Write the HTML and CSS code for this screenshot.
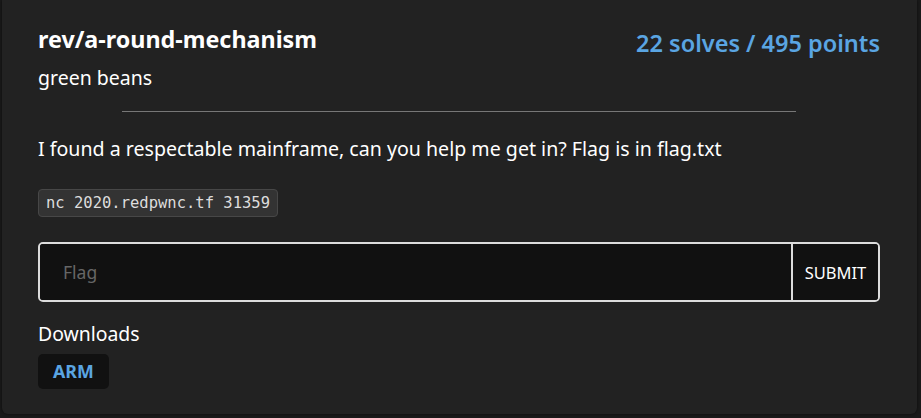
FILE: index.html
```html
<!DOCTYPE html>
<html>
<head>
<meta charset="utf-8">
<link rel="stylesheet" href="styles.css">
</head>
<body>
<div class="card">
  <div class="head">
    <div>
      <h1 class="title">rev/a-round-mechanism</h1>
      <p class="author">green beans</p>
    </div>
    <div class="score">22 solves / 495 points</div>
  </div>
  <hr class="rule">
  <p class="desc">I found a respectable mainframe, can you help me get in? Flag is in flag.txt</p>
  <code class="cmd">nc 2020.redpwnc.tf 31359</code>
  <form class="flagform">
    <input class="flaginput" type="text" placeholder="Flag">
    <button class="submit" type="button">SUBMIT</button>
  </form>
  <div class="downloads">
    <p class="dl-title">Downloads</p>
    <a class="dl-btn">ARM</a>
  </div>
</div>
</body>
</html>
```
FILE: styles.css
```css
html, body {
  margin: 0;
  padding: 0;
  background: #1a1a1a;
}
body {
  font-family: "Noto Sans", "Open Sans", sans-serif;
  color: #fff;
  width: 921px;
  height: 418px;
  overflow: hidden;
}
.card {
  margin: 0 4px 0 2px;
  height: 414px;
  box-sizing: border-box;
  background: #222;
  border-radius: 0 0 6px 6px;
  padding: 24px 37px 0 36px;
  box-shadow: 0 0 3px rgba(0,0,0,0.6);
}
.head {
  display: flex;
  justify-content: space-between;
  align-items: flex-start;
}
.title {
  margin: 0;
  font-size: 23.3px;
  font-weight: 700;
  line-height: 30px;
}
.author {
  margin: 11px 0 0;
  font-size: 19.5px;
  line-height: 26px;
}
.score {
  color: #5aa5e2;
  font-size: 23.5px;
  font-weight: 600;
  line-height: 30px;
  margin-top: 4px;
}
.rule {
  width: 80%;
  margin: 20px auto 0;
  border: 0;
  border-top: 1px solid #777;
}
.desc {
  margin: 24px 0 0;
  font-size: 19.6px;
  line-height: 26px;
}
.cmd {
  display: block;
  width: fit-content;
  margin-top: 27px;
  font-family: "DejaVu Sans Mono", monospace;
  font-size: 15.5px;
  color: #ddd;
  background: #333;
  border: 1px solid #474747;
  border-radius: 4px;
  padding: 2px 7px;
  line-height: 22px;
}
.flagform {
  display: flex;
  margin: 25px 0 0;
  height: 60px;
  border: 2px solid #dcdcdc;
  border-radius: 5px;
  box-sizing: border-box;
  background: #111;
  overflow: hidden;
}
.flaginput {
  flex: 1;
  background: #111;
  border: 0;
  outline: none;
  padding: 0 23px;
  font-family: "Noto Sans", sans-serif;
  font-size: 17.5px;
  color: #fff;
}
.flaginput::placeholder {
  color: #666;
}
.submit {
  background: #111;
  border: 0;
  border-left: 2px solid #dcdcdc;
  color: #fff;
  font-family: "Noto Sans", sans-serif;
  font-size: 16.5px;
  padding: 0;
  width: 87px;
}
.downloads {
  margin-top: 19px;
}
.dl-title {
  margin: 0;
  font-size: 19.4px;
  line-height: 26px;
}
.dl-btn {
  display: block;
  width: fit-content;
  margin-top: 7px;
  background: #111;
  color: #5aa5e2;
  font-weight: 700;
  font-size: 17.8px;
  border-radius: 5px;
  padding: 0 15px;
  line-height: 35px;
}
```
